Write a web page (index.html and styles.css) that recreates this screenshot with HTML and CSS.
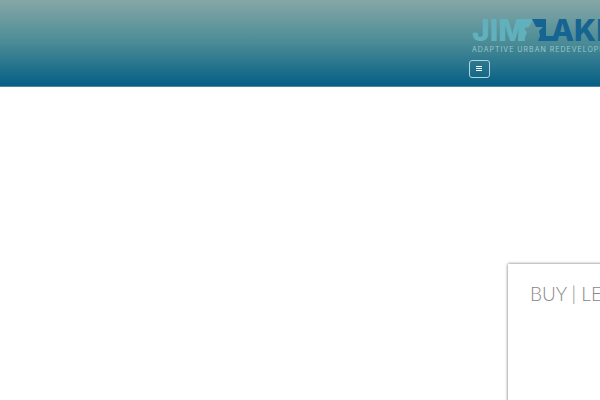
FILE: index.html
```html
<!DOCTYPE html>
<html lang="en">
<head>
<meta charset="utf-8">
<title>Jim Lake | Adaptive Urban Redevelopment</title>
<link rel="stylesheet" href="styles.css">
</head>
<body>
<header class="site-header">
  <a class="logo" href="#" aria-label="Jim Lake home">
    <svg class="logo-mark" width="150" height="24" viewBox="0 0 150 24">
      <text class="jim" x="0" y="23">JIM</text>
      <path class="flag-light" d="M47 1H61L58 7 57 9 51 10 55 14 53 19 50 23H46Z"/>
      <path class="flag-dark" d="M60 1H74V18H82V23H66L68 18 67 13 71 9 64 9Z"/>
      <text class="lake" x="79" y="23">AKE</text>
    </svg>
    <span class="tagline">ADAPTIVE URBAN REDEVELOPMENT</span>
  </a>
  <button class="menu-toggle" type="button" aria-label="Menu">
    <svg width="7" height="6" viewBox="0 0 7 6"><path d="M0 .5H6M0 2.5H6M0 4.5H6"/></svg>
  </button>
</header>
<main class="hero">
  <section class="card">
    <h2>BUY | LEASE</h2>
  </section>
</main>
</body>
</html>
```
FILE: styles.css
```css
body {
  margin: 0;
  background: #fff;
  font-family: Inter, "Liberation Sans", sans-serif;
  overflow: hidden;
}

.site-header {
  display: flex;
  flex-direction: column;
  align-items: flex-start;
  padding: 18px 0 8px 469px;
  background: linear-gradient(#86a7a6, #4a8b96 50%, #055f85);
  border-bottom: 1px solid #52869a;
}

.logo {
  display: block;
  margin-left: 3px;
  text-decoration: none;
}

.logo-mark {
  display: block;
}

.logo-mark text {
  font-size: 30px;
  font-weight: 800;
}

.jim, .flag-light {
  fill: #60b1bd;
}

.lake, .flag-dark {
  fill: #156491;
}

.tagline {
  display: block;
  margin-top: 4px;
  color: #9bc8cd;
  font-size: 7px;
  line-height: 8px;
  letter-spacing: 1px;
  white-space: nowrap;
}

.menu-toggle {
  display: flex;
  align-items: center;
  justify-content: center;
  width: 21px;
  height: 18px;
  margin: 6px 0 0;
  padding: 0;
  background: none;
  border: 1px solid #b5d3dc;
  border-radius: 3px;
}

.menu-toggle path {
  stroke: #fff;
  stroke-width: 1;
}

.hero {
  padding: 177px 0 0 508px;
}

.card {
  width: 320px;
  min-height: 300px;
  background: #fff;
  box-shadow: 0 0 3px rgba(0, 0, 0, 0.6);
}

.card h2 {
  margin: 0;
  padding: 18px 22px;
  color: #888;
  font-family: Lato, sans-serif;
  font-size: 19px;
  font-weight: 300;
  line-height: 24px;
  white-space: nowrap;
}
```
